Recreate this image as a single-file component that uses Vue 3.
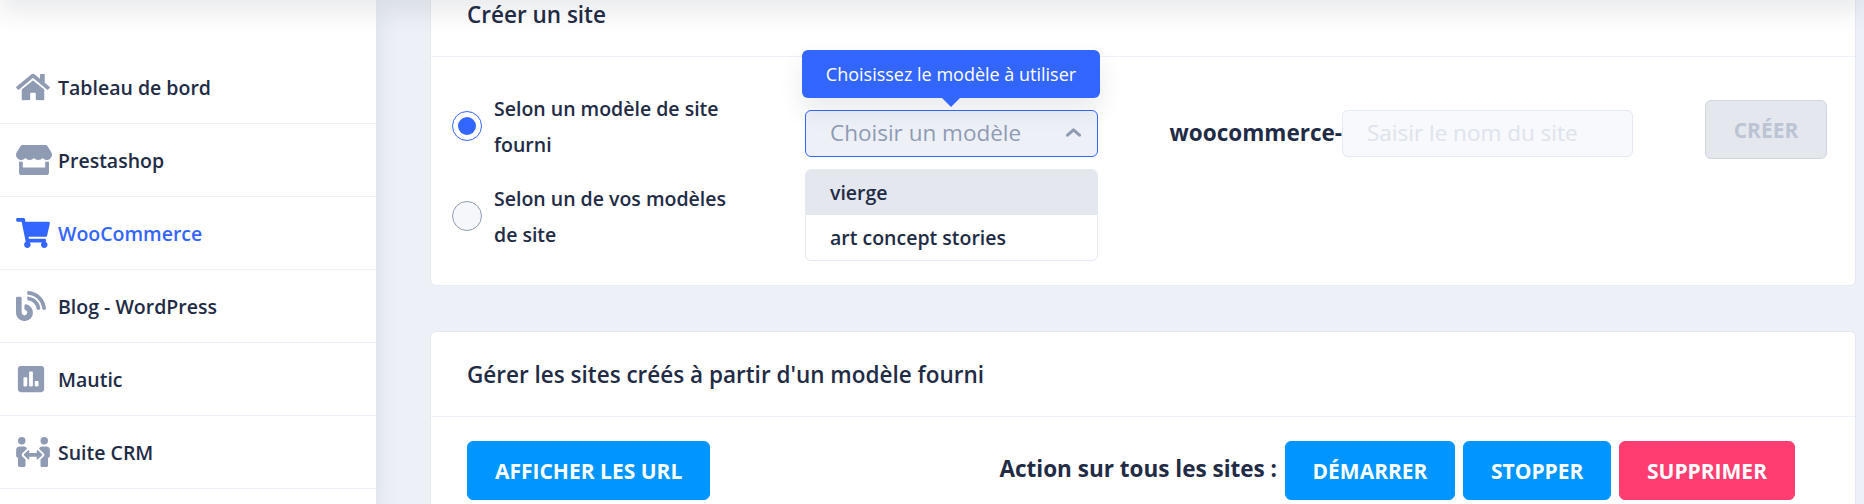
<script setup>
import { ref } from 'vue';

const menu = [
    {
        title: 'Tableau de bord',
        width: 34,
        viewBox: '0 0 576 512',
        path: 'M280.37 148.26L96 300.11V464a16 16 0 0 0 16 16l112.06-.29a16 16 0 0 0 15.92-16V368a16 16 0 0 1 16-16h64a16 16 0 0 1 16 16v95.64a16 16 0 0 0 16 16.05L464 480a16 16 0 0 0 16-16V300L295.67 148.26a12.19 12.19 0 0 0-15.3 0zM571.6 251.47L488 182.56V44.05a12 12 0 0 0-12-12h-56a12 12 0 0 0-12 12v72.61L318.47 43a48 48 0 0 0-61 0L4.34 251.47a12 12 0 0 0-1.6 16.9l25.5 31A12 12 0 0 0 45.15 301l235.22-193.74a12.19 12.19 0 0 1 15.3 0L530.9 301a12 12 0 0 0 16.9-1.6l25.5-31a12 12 0 0 0-1.7-16.93z'
    },
    {
        title: 'Prestashop',
        width: 36,
        viewBox: '0 0 616 512',
        path: 'M602 118.6L537.1 15C531.3 5.7 521 0 510 0H106C95 0 84.7 5.7 78.9 15L14 118.6c-33.5 53.5-3.8 127.9 58.8 136.4 4.5.6 9.1.9 13.7.9 29.6 0 55.8-13 73.8-33.1 18 20.1 44.3 33.1 73.8 33.1 29.6 0 55.8-13 73.8-33.1 18 20.1 44.3 33.1 73.8 33.1 29.6 0 55.8-13 73.8-33.1 18.1 20.1 44.3 33.1 73.8 33.1 4.7 0 9.2-.3 13.7-.9 62.8-8.4 92.6-82.8 59-136.4zM529.5 288c-10 0-19.9-1.5-29.5-3.8V384H116v-99.8c-9.6 2.2-19.5 3.8-29.5 3.8-6 0-12.1-.4-18-1.2-5.6-.8-11.1-2.1-16.4-3.6V480c0 17.7 14.3 32 32 32h448c17.7 0 32-14.3 32-32V283.2c-5.4 1.6-10.8 2.9-16.4 3.6-6.1.8-12.1 1.2-18.2 1.2z'
    },
    {
        title: 'WooCommerce',
        width: 34,
        viewBox: '0 0 576 512',
        path: 'M528.12 301.319l47.273-208C578.806 78.301 567.391 64 551.99 64H159.208l-9.166-44.81C147.758 8.021 137.93 0 126.529 0H24C10.745 0 0 10.745 0 24v16c0 13.255 10.745 24 24 24h69.883l70.248 343.435C147.325 417.1 136 435.222 136 456c0 30.928 25.072 56 56 56s56-25.072 56-56c0-15.674-6.447-29.835-16.824-40h209.647C430.447 426.165 424 440.326 424 456c0 30.928 25.072 56 56 56s56-25.072 56-56c0-22.172-12.888-41.332-31.579-50.405l5.517-24.276c3.413-15.018-8.002-29.319-23.403-29.319H218.117l-6.545-32h293.145c11.206 0 20.92-7.754 23.403-18.681z'
    },
    {
        title: 'Blog - WordPress',
        width: 30,
        viewBox: '0 0 512 512',
        path: 'M172.2 226.8c-14.6-2.9-28.2 8.9-28.2 23.8V301c0 10.2 7.1 18.4 16.7 22 18.2 6.8 31.3 24.4 31.3 45 0 26.5-21.5 48-48 48s-48-21.5-48-48V120c0-13.3-10.7-24-24-24H24c-13.3 0-24 10.7-24 24v248c0 89.5 82.1 160.2 175 140.7 54.4-11.4 98.3-55.4 109.7-109.7 17.4-82.9-37-157.2-112.5-172.2zM209 0c-9.2-.5-17 6.8-17 16v31.6c0 8.5 6.6 15.5 15 15.9 129.4 7 233.4 112 240.9 241.5.5 8.4 7.5 15 15.9 15h32.1c9.2 0 16.5-7.8 16-17C503.4 139.8 372.2 8.6 209 0zm.3 96c-9.3-.7-17.3 6.7-17.3 16.1v32.1c0 8.4 6.5 15.3 14.8 15.9 76.8 6.3 138 68.2 144.9 145.2.8 8.3 7.6 14.7 15.9 14.7h32.2c9.3 0 16.8-8 16.1-17.3-8.4-110.1-96.5-198.2-206.6-206.7z'
    },
    {
        title: 'Mautic',
        width: 30,
        viewBox: '0 0 448 512',
        path: 'M400 32H48C21.5 32 0 53.5 0 80v352c0 26.5 21.5 48 48 48h352c26.5 0 48-21.5 48-48V80c0-26.5-21.5-48-48-48zM160 368c0 8.84-7.16 16-16 16h-32c-8.84 0-16-7.16-16-16V240c0-8.84 7.16-16 16-16h32c8.84 0 16 7.16 16 16v128zm96 0c0 8.84-7.16 16-16 16h-32c-8.84 0-16-7.16-16-16V144c0-8.84 7.16-16 16-16h32c8.84 0 16 7.16 16 16v224zm96 0c0 8.84-7.16 16-16 16h-32c-8.84 0-16-7.16-16-16v-64c0-8.84 7.16-16 16-16h32c8.84 0 16 7.16 16 16v64z'
    },
    {
        title: 'Suite CRM',
        width: 34,
        viewBox: '0 0 576 512',
        path: 'M96,128A64,64,0,1,0,32,64,64,64,0,0,0,96,128Zm0,176.08a44.11,44.11,0,0,1,13.64-32L181.77,204c1.65-1.55,3.77-2.31,5.61-3.57A63.91,63.91,0,0,0,128,160H64A64,64,0,0,0,0,224v96a32,32,0,0,0,32,32V480a32,32,0,0,0,32,32h64a32,32,0,0,0,32-32V383.61l-50.36-47.53A44.08,44.08,0,0,1,96,304.08ZM480,128a64,64,0,1,0-64-64A64,64,0,0,0,480,128Zm32,32H448a63.91,63.91,0,0,0-59.38,40.42c1.84,1.27,4,2,5.62,3.59l72.12,68.06a44.37,44.37,0,0,1,0,64L416,383.62V480a32,32,0,0,0,32,32h64a32,32,0,0,0,32-32V352a32,32,0,0,0,32-32V224A64,64,0,0,0,512,160ZM444.4,295.34l-72.12-68.06A12,12,0,0,0,352,236v36H224V236a12,12,0,0,0-20.28-8.73L131.6,295.34a12.4,12.4,0,0,0,0,17.47l72.12,68.07A12,12,0,0,0,224,372.14V336H352v36.14a12,12,0,0,0,20.28,8.74l72.12-68.07A12.4,12.4,0,0,0,444.4,295.34Z'
    }
];

const current = ref('WooCommerce');

const sources = [
    { value: 'fourni', label: 'Selon un modèle de site fourni' },
    { value: 'perso', label: 'Selon un de vos modèles de site' }
];
const source = ref('fourni');

const templates = ['vierge', 'art concept stories'];
const highlighted = ref('vierge');
const siteName = ref('');
</script>

<template>
    <div class="layout">
        <header class="topbar"></header>

        <aside class="sidebar">
            <ul class="menu">
                <li v-for="item in menu" :key="item.title">
                    <a class="menu-link" :class="{ active: item.title === current }" @click="current = item.title">
                        <span class="menu-icon">
                            <svg :viewBox="item.viewBox" :width="item.width" height="30" fill="currentColor">
                                <path :d="item.path" />
                            </svg>
                        </span>
                        <span class="menu-title">{{ item.title }}</span>
                    </a>
                </li>
            </ul>
        </aside>

        <main class="content">
            <section class="card">
                <div class="card-header">Créer un site</div>
                <div class="card-body create">
                    <div class="radios">
                        <label v-for="s in sources" :key="s.value" class="radio" @click="source = s.value">
                            <span class="circle" :class="{ checked: source === s.value }"></span>
                            <span class="radio-text">{{ s.label }}</span>
                        </label>
                    </div>

                    <div class="select">
                        <div class="tooltip">Choisissez le modèle à utiliser</div>
                        <button class="select-button">
                            <span>Choisir un modèle</span>
                            <svg width="17" height="11" viewBox="0 0 17 11" fill="none" stroke="currentColor"
                                 stroke-width="3" stroke-linecap="round" stroke-linejoin="round">
                                <path d="M2.5 8.2L8.5 2.8L14.5 8.2" />
                            </svg>
                        </button>
                        <ul class="options">
                            <li v-for="t in templates" :key="t" :class="{ highlighted: t === highlighted }"
                                @mouseenter="highlighted = t">{{ t }}</li>
                        </ul>
                    </div>

                    <div class="name">
                        <span class="prefix">woocommerce-</span>
                        <input v-model="siteName" type="text" placeholder="Saisir le nom du site" />
                    </div>

                    <button class="btn disabled" disabled>CRÉER</button>
                </div>
            </section>

            <section class="card">
                <div class="card-header">Gérer les sites créés à partir d'un modèle fourni</div>
                <div class="card-body manage">
                    <button class="btn info">AFFICHER LES URL</button>
                    <div class="actions">
                        <span class="actions-label">Action sur tous les sites :</span>
                        <button class="btn info">DÉMARRER</button>
                        <button class="btn info">STOPPER</button>
                        <button class="btn danger">SUPPRIMER</button>
                    </div>
                </div>
            </section>
        </main>
    </div>
</template>

<style>
body {
    margin: 0;
    overflow: hidden;
    background: #edf1f7;
}
</style>

<style scoped>
.layout {
    position: relative;
    display: flex;
    height: 504px;
    overflow: hidden;
    background: #edf1f7;
    color: #222b45;
    font-family: "Open Sans", "Noto Sans", sans-serif;
}

.layout * {
    box-sizing: border-box;
}

button,
input {
    font-family: inherit;
}

ul {
    margin: 0;
    padding: 0;
    list-style: none;
}

/* Only the shadow of the fixed bar reaches into the page */
.topbar {
    position: absolute;
    z-index: 10;
    top: -114px;
    left: 0;
    right: 0;
    height: 114px;
    box-shadow: 0 12px 24px 0 rgba(44, 51, 73, 0.1);
    pointer-events: none;
}

.sidebar {
    flex: none;
    width: 376px;
    padding-top: 51px;
    background: #fff;
    box-shadow: 0 12px 24px 0 rgba(44, 51, 73, 0.1);
}

.menu-link {
    display: flex;
    align-items: center;
    height: 73px;
    padding-left: 16px;
    border-bottom: 1px solid #edf1f7;
    font-size: 19.5px;
    font-weight: 600;
    line-height: 36px;
    cursor: pointer;
}

.menu-icon {
    display: flex;
    width: 42px;
    color: #8f9bb3;
}

.menu-title {
    padding-top: 2px;
}

.menu-link.active,
.menu-link.active .menu-icon {
    color: #3366ff;
}

.content {
    flex: 1;
    padding: 0 8px 0 54px;
    margin-top: -29px;
}

.card {
    margin-bottom: 45px;
    border: 1px solid #e4e9f2;
    border-radius: 6px;
    background: #fff;
}

.card-header {
    height: 85px;
    padding: 25px 36px 23px;
    border-bottom: 1px solid #edf1f7;
    font-size: 22.5px;
    font-weight: 600;
    line-height: 36px;
}

.create {
    display: flex;
    align-items: flex-start;
    height: 228px;
    padding: 33px 28px 0 21px;
}

.radios {
    display: flex;
    flex-direction: column;
    gap: 16px;
    width: 353px;
}

.radio {
    display: flex;
    align-items: center;
    gap: 12px;
}

.circle {
    display: flex;
    align-items: center;
    justify-content: center;
    width: 30px;
    height: 30px;
    margin-bottom: 2px;
    border: 1px solid #8f9bb3;
    border-radius: 50%;
    background: #f5f7fa;
}

.circle.checked {
    border-color: #3366ff;
    background: #fff;
}

.circle.checked::before {
    content: '';
    width: 18px;
    height: 18px;
    border-radius: 50%;
    background: #3366ff;
}

.radio-text {
    width: 245px;
    padding: 1px 0;
    font-size: 19.5px;
    font-weight: 600;
    line-height: 36px;
}

.select {
    position: relative;
    width: 293px;
    margin-top: 20px;
}

.tooltip {
    position: absolute;
    z-index: 2;
    bottom: calc(100% + 12px);
    left: -3px;
    width: 298px;
    height: 48px;
    border-radius: 6px;
    background: #3366ff;
    box-shadow: 0 12px 24px 0 rgba(44, 51, 73, 0.1);
    color: #fff;
    font-size: 18px;
    line-height: 48px;
    text-align: center;
    white-space: nowrap;
}

.tooltip::after {
    content: '';
    position: absolute;
    top: 100%;
    left: 50%;
    margin-left: -9px;
    border: 9px solid transparent;
    border-top-color: #3366ff;
    border-bottom: 0;
}

.select-button {
    display: flex;
    align-items: center;
    justify-content: space-between;
    width: 100%;
    height: 47px;
    padding: 0 15px 2px 24px;
    border: 1px solid #3366ff;
    border-radius: 6px;
    background: #edf1f7;
    color: #8f9bb3;
    font-size: 22.5px;
}

.options {
    margin-top: 12px;
    overflow: hidden;
    border: 1px solid #e4e9f2;
    border-radius: 6px;
    background: #fff;
}

.options li {
    height: 45px;
    padding-left: 24px;
    font-size: 19.5px;
    font-weight: 600;
    line-height: 45px;
}

.options .highlighted {
    background: #e4e7ee;
}

.name {
    display: flex;
    align-items: center;
    justify-content: flex-end;
    width: 535px;
    height: 47px;
    margin-top: 20px;
}

.prefix {
    padding-bottom: 2px;
    font-size: 22.5px;
    font-weight: 700;
}

.name input {
    width: 291px;
    height: 47px;
    padding: 0 24px 2px;
    border: 1px solid #e4e9f2;
    border-radius: 6px;
    outline: none;
    background: #f7f9fc;
    font-size: 22.5px;
}

.name input::placeholder {
    color: #dee3ec;
    opacity: 1;
}

.btn {
    height: 59px;
    padding: 0 27px;
    border: 1px solid transparent;
    border-radius: 6px;
    color: #fff;
    font-size: 21px;
    font-weight: 700;
    line-height: 24px;
    white-space: nowrap;
}

.btn.info {
    border-color: #0095ff;
    background: #0095ff;
}

.btn.danger {
    border-color: #ff3d71;
    background: #ff3d71;
}

.btn.disabled {
    width: 122px;
    margin: 10px 0 0 auto;
    border-color: #d0d5df;
    background: #e4e7ee;
    color: #bcc4d3;
}

.manage {
    display: flex;
    justify-content: space-between;
    padding: 24px 60px 24px 36px;
}

.actions {
    display: flex;
    align-items: center;
    gap: 7.5px;
}

.actions-label {
    margin-bottom: 4px;
    font-size: 22.5px;
    font-weight: 700;
}
</style>
